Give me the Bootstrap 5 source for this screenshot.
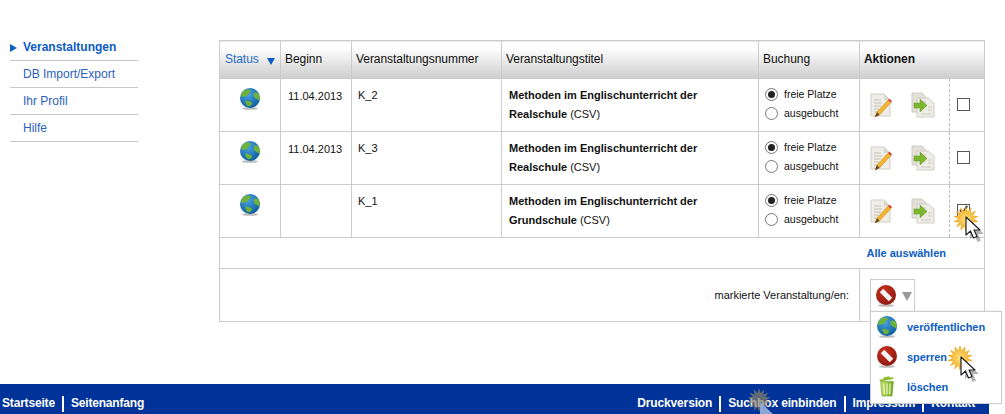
<!DOCTYPE html>
<html lang="de">
<head>
    <meta charset="UTF-8">
    <meta name="viewport" content="width=device-width, initial-scale=1.0">
    <title>Veranstaltungen</title>
    <link href="https://cdn.jsdelivr.net/npm/bootstrap@5.3.0/dist/css/bootstrap.min.css" rel="stylesheet">
    <style>
        html, body { height: 414px; overflow: hidden; }
        body { font-family: "Liberation Sans", Arial, sans-serif; font-size: 12px; color: #111; background: #fff; position: relative; }
        a { text-decoration: none; color: #0b5cc4; }
        .page-top { height: 384px; padding: 34px 0 0 10px; }
        .side-nav { width: 128px; margin-right: 81px; flex: none; }
        .side-nav a { display: block; height: 27px; line-height: 27px; padding-left: 13px; border-bottom: 1px solid #c8c8c8; color: #2a62bd; position: relative; }
        .side-nav a.active { font-weight: 700; color: #0b5cc4; }
        .side-nav a.active::before { content: ""; position: absolute; left: 0; top: 10px; border-left: 7px solid #0b5cc4; border-top: 4px solid transparent; border-bottom: 4px solid transparent; }
        .data-wrap { margin-top: 6px; width: 765px; flex: none; }
        .data-table { table-layout: fixed; width: 765px; border-collapse: collapse; margin: 0; font-size: 11px; }
        .data-table th, .data-table td { border: 1px solid #ccc; padding: 0 6px; vertical-align: top; }
        .data-table thead th { height: 38px; vertical-align: middle; font-size: 12px; font-weight: 400; letter-spacing: -.05px; background: linear-gradient(#fff, #fdfdfd 20%, #cdcdcd); padding: 0 0 2px 4px; }
        .data-table thead th.strong-head { font-weight: 700; }
        .data-table thead th.sort-head { padding-left: 5px; color: #1f6cc6; white-space: nowrap; }
        .sort-arrow { display: inline-block; margin-left: 5px; vertical-align: -2px; border-top: 7px solid #0b5cc4; border-left: 4px solid transparent; border-right: 4px solid transparent; }
        .data-table tbody tr.event-row td { height: 53px; }
        .cell-status { text-align: center; padding-top: 8px !important; }
        .cell-date { padding: 9px 0 0 7px !important; }
        .cell-num { padding-top: 8px !important; font-size: 11px; }
        .cell-title { line-height: 19px; padding: 7px 0 0 7px !important; }
        .cell-book { padding-top: 6px !important; padding-left: 6px !important; }
        .radio-line { display: flex; align-items: center; height: 19px; gap: 6px; font-size: 10.5px; }
        .radio-dot { width: 13px; height: 13px; flex: none; border: 1px solid #777; border-radius: 50%; background: #fff; position: relative; }
        .radio-dot.on::after { content: ""; position: absolute; left: 2px; top: 2px; width: 7px; height: 7px; border-radius: 50%; background: #222; }
        .cell-act { padding: 13px 0 0 9px !important; border-right: 1px dashed #bbb !important; white-space: nowrap; }
        .cell-act svg + svg { margin-left: 18px; }
        .cell-check { padding: 19px 0 0 7px !important; border-left: 1px dashed #bbb !important; }
        .check-box { width: 13px; height: 13px; border: 1px solid #555; background: #fff; position: relative; }
        .select-row td { height: 31px; vertical-align: middle !important; text-align: right; padding-right: 38px !important; }
        .select-row a { font-weight: 700; font-size: 11px; }
        .bulk-row td { height: 53px; }
        .bulk-label { text-align: right; padding: 18px 10px 0 0 !important; font-size: 11px; }
        .bulk-cell { padding: 10px 0 0 10px !important; }
        .bulk-btn { width: 45px; height: 33px; border: 1px solid #ccc; background: #fff; display: flex; align-items: center; padding-left: 4px; gap: 5px; }
        .bulk-caret { border-top: 9px solid #999; border-left: 5px solid transparent; border-right: 5px solid transparent; margin-top: 2px; }
        .bulk-menu { position: absolute; left: 870px; top: 311px; width: 132px; height: 93px; background: #fff; border: 1px solid #ccc; z-index: 5; box-shadow: 0 0 2px rgba(0,0,0,.1); }
        .bulk-menu a { display: flex; align-items: center; height: 30px; font-weight: 700; font-size: 11px; letter-spacing: -.05px; }
        .menu-glyph { width: 36px; flex: none; display: flex; justify-content: center; padding-right: 4px; }
        .foot-bar { width: 989px; height: 30px; background: #003399; display: flex; justify-content: space-between; padding: 0 14px 0 2px; font-weight: 700; letter-spacing: -.18px; }
        .foot-bar ul { display: flex; list-style: none; margin: 12px 0 0; padding: 0; height: 16px; }
        .foot-bar ul.foot-right { letter-spacing: -.14px; }
        .foot-bar li { padding: 0 7px; border-left: 2px solid #fff; line-height: 14px; color: #fff; }
        .foot-bar li:first-child { border-left: 0; padding-left: 0; }
        .foot-bar li:last-child { padding-right: 0; }
        .foot-bar a { color: #fff; }
        .cursor-mark { position: absolute; z-index: 6; pointer-events: none; }
        .cursor-dim { opacity: .7; }
    </style>
</head>
<body>
    <svg width="0" height="0" class="position-absolute">
        <defs>
            <radialGradient id="seaFill" cx="40%" cy="30%" r="75%"><stop offset="0" stop-color="#4aa3e0"/><stop offset="1" stop-color="#0b5a9c"/></radialGradient>
            <radialGradient id="redFill" cx="40%" cy="30%" r="80%"><stop offset="0" stop-color="#c9301f"/><stop offset="1" stop-color="#8a170e"/></radialGradient>
            <radialGradient id="burstFill"><stop offset="0" stop-color="#ffe27a"/><stop offset="1" stop-color="#eba21c"/></radialGradient>
            <linearGradient id="binFill" x1="0" x2="1"><stop offset="0" stop-color="#c9e36a"/><stop offset="1" stop-color="#6fa81e"/></linearGradient>
            <symbol id="globeIcon" viewBox="0 0 22 24">
                <ellipse cx="11" cy="21.5" rx="8" ry="1.3" fill="#bbb"/>
                <circle cx="11" cy="11" r="10" fill="url(#seaFill)"/>
                <path d="M5 3.5c3-1.6 6-1 7 .5-.5 2-2.500 1.500-3 3.500S5.500 9 3.500 10L2 9c.3-2 1.300-4 3-5.500zM15 6c2-.8 3.500-.5 5 1.500 1 2 1 3.500.5 5.500-1.500.5-2-1-3.500-1.500S14 9 15 6zM6 14c2-.5 4 .5 6 1s1 3-1 4-4-.5-5-5z" fill="#6fb23a"/>
            </symbol>
            <symbol id="blockIcon" viewBox="0 0 22 24">
                <ellipse cx="11" cy="21.5" rx="8" ry="1.300" fill="#bbb"/>
                <circle cx="11" cy="11" r="10" fill="url(#redFill)"/>
                <path d="M6.500 6.500l9 9" stroke="#f4f4f4" stroke-width="5"/>
            </symbol>
            <symbol id="editIcon" viewBox="0 0 24 26">
                <path d="M2 2h13l6 6v16H2z" fill="#efede7" stroke="#d2cfc6"/>
                <path d="M15 2v6h6z" fill="#d9d6cc"/>
                <path d="M5 8h7M5 11h8M5 14h7M5 17h5M5 20h4" stroke="#c4c1b8"/>
                <path d="M6 25l2-5L19 8l3 2.500L10.500 23z" fill="#f2b430" stroke="#c98a15" stroke-width=".5"/>
                <path d="M19 8l1.200-1.300 2.800 2.400-1 1.400z" fill="#d6342c"/>
                <path d="M6 25l2-5 2.500 3z" fill="#5c4630"/>
            </symbol>
            <symbol id="copyIcon" viewBox="0 0 24 26">
                <path d="M1 1h10l4 4v15H1z" fill="#e2e0d9" stroke="#cfccc3"/>
                <path d="M6 6h11l6 5v14H6z" fill="#efede8" stroke="#cfccc3"/>
                <path d="M10 10h5M17 15h4M17 18h4M10 22h10" stroke="#cbc8be"/>
                <path d="M3 11h6V7l7 6.500-7 6.500v-4H3z" fill="#7cb82f" stroke="#5f9420" stroke-width=".5"/>
            </symbol>
            <symbol id="binIcon" viewBox="0 0 20 24">
                <path d="M6 2.500l7-1.500M2 5l15-3" stroke="#8dbb2c" stroke-width="2"/>
                <path d="M3 6h14l-1.500 16h-11z" fill="url(#binFill)" stroke="#6c9c1e" stroke-width=".7"/>
                <path d="M6.500 8l.6 12M10 8v12M13.500 8l-.6 12" stroke="#f0f6d2" stroke-width="1.300"/>
            </symbol>
            <symbol id="burstIcon" viewBox="0 0 30 30">
                <polygon id="burstShape" fill="url(#burstFill)"/>
            </symbol>
            <symbol id="burstDimIcon" viewBox="0 0 30 30">
                <polygon id="burstDimShape" fill="#8b826a"/>
            </symbol>
            <symbol id="arrowIcon" viewBox="0 0 20 28">
                <path d="M4 3v18l4.500-4 3 7 3.500-1.500-3-6.500h6z" fill="#000" opacity=".3" transform="translate(2 2)"/>
                <path d="M2 1v18l4.500-4 3 7 3.500-1.500-3-6.500h6z" fill="#fff" stroke="#222" stroke-width="1.200" stroke-linejoin="round"/>
            </symbol>
            <symbol id="arrowDimIcon" viewBox="0 0 20 28">
                <path d="M2 1v18l4.500-4 3 7 3.500-1.500-3-6.500h6z" fill="#8ea6d6"/>
            </symbol>
        </defs>
    </svg>

    <div class="page-top d-flex">
        <nav class="side-nav">
            <a href="#" class="active">Veranstaltungen</a>
            <a href="#">DB Import/Export</a>
            <a href="#">Ihr Profil</a>
            <a href="#">Hilfe</a>
        </nav>
        <div class="data-wrap">
            <table class="data-table">
                <colgroup>
                    <col style="width:61px"><col style="width:71px"><col style="width:150px"><col style="width:257px"><col style="width:101px"><col style="width:90px"><col style="width:35px">
                </colgroup>
                <thead>
                    <tr>
                        <th class="sort-head">Status <span class="sort-arrow"></span></th>
                        <th>Beginn</th>
                        <th>Veranstaltungsnummer</th>
                        <th>Veranstaltungstitel</th>
                        <th>Buchung</th>
                        <th class="strong-head" colspan="2">Aktionen</th>
                    </tr>
                </thead>
                <tbody id="rows"></tbody>
            </table>
        </div>
    </div>

    <footer class="foot-bar">
        <ul><li><a href="#">Startseite</a></li><li><a href="#">Seitenanfang</a></li></ul>
        <ul class="foot-right"><li><a href="#">Druckversion</a></li><li><a href="#">Suchbox einbinden</a></li><li><a href="#">Impressum</a></li><li><a href="#">Kontakt</a></li></ul>
    </footer>

    <div class="bulk-menu">
        <a href="#"><span class="menu-glyph"><svg width="22" height="24"><use href="#globeIcon"/></svg></span>veröffentlichen</a>
        <a href="#"><span class="menu-glyph"><svg width="22" height="24"><use href="#blockIcon"/></svg></span>sperren</a>
        <a href="#"><span class="menu-glyph"><svg width="18" height="22"><use href="#binIcon"/></svg></span>löschen</a>
    </div>

    <svg class="cursor-mark" style="left:953px;top:206px" width="26" height="26"><use href="#burstIcon"/></svg>
    <svg class="cursor-mark" style="left:964px;top:216px" width="20" height="28"><use href="#arrowIcon"/></svg>
    <svg class="cursor-mark" style="left:947px;top:345px" width="26" height="26"><use href="#burstIcon"/></svg>
    <svg class="cursor-mark" style="left:959px;top:356px" width="20" height="28"><use href="#arrowIcon"/></svg>
    <svg class="cursor-mark cursor-dim" style="left:747px;top:388px" width="24" height="24"><use href="#burstDimIcon"/></svg>
    <svg class="cursor-mark" style="left:758px;top:401px" width="20" height="28"><use href="#arrowDimIcon"/></svg>

    <script>
        // 14 point star for the click marker
        const starPoints = [];
        for (let i = 0; i < 28; i++) {
            const r = i % 2 ? 9 : 15;
            const a = i * Math.PI / 14;
            starPoints.push((15 + r * Math.sin(a)).toFixed(1) + ',' + (15 - r * Math.cos(a)).toFixed(1));
        }
        document.getElementById('burstShape').setAttribute('points', starPoints.join(' '));
        document.getElementById('burstDimShape').setAttribute('points', starPoints.join(' '));

        const events = [
            { date: '11.04.2013', num: 'K_2', title: 'Methoden im Englischunterricht der', school: 'Realschule', checked: false },
            { date: '11.04.2013', num: 'K_3', title: 'Methoden im Englischunterricht der', school: 'Realschule', checked: false },
            { date: '', num: 'K_1', title: 'Methoden im Englischunterricht der', school: 'Grundschule', checked: true }
        ];
        const rows = document.getElementById('rows');
        events.forEach(ev => {
            const tr = document.createElement('tr');
            tr.className = 'event-row';
            tr.innerHTML = `
                <td class="cell-status"><svg width="22" height="24"><use href="#globeIcon"/></svg></td>
                <td class="cell-date">${ev.date}</td>
                <td class="cell-num">${ev.num}</td>
                <td class="cell-title"><b>${ev.title}<br>${ev.school}</b> (CSV)</td>
                <td class="cell-book">
                    <div class="radio-line"><span class="radio-dot on"></span>freie Platze</div>
                    <div class="radio-line"><span class="radio-dot"></span>ausgebucht</div>
                </td>
                <td class="cell-act"><svg width="24" height="26"><use href="#editIcon"/></svg><svg width="24" height="26"><use href="#copyIcon"/></svg></td>
                <td class="cell-check"><div class="check-box">${ev.checked ? '<svg width="11" height="11" class="d-block"><path d="M2 5l3 3 4-7" fill="none" stroke="#222" stroke-width="2"/></svg>' : ''}</div></td>`;
            rows.appendChild(tr);
        });
        rows.insertAdjacentHTML('beforeend', `
            <tr class="select-row"><td colspan="7"><a href="#">Alle auswählen</a></td></tr>
            <tr class="bulk-row">
                <td colspan="5" class="bulk-label">markierte Veranstaltung/en:</td>
                <td colspan="2" class="bulk-cell"><div class="bulk-btn"><svg width="22" height="24"><use href="#blockIcon"/></svg><span class="bulk-caret"></span></div></td>
            </tr>`);
    </script>
    <script src="https://cdn.jsdelivr.net/npm/bootstrap@5.3.0/dist/js/bootstrap.bundle.min.js"></script>
</body>
</html>
